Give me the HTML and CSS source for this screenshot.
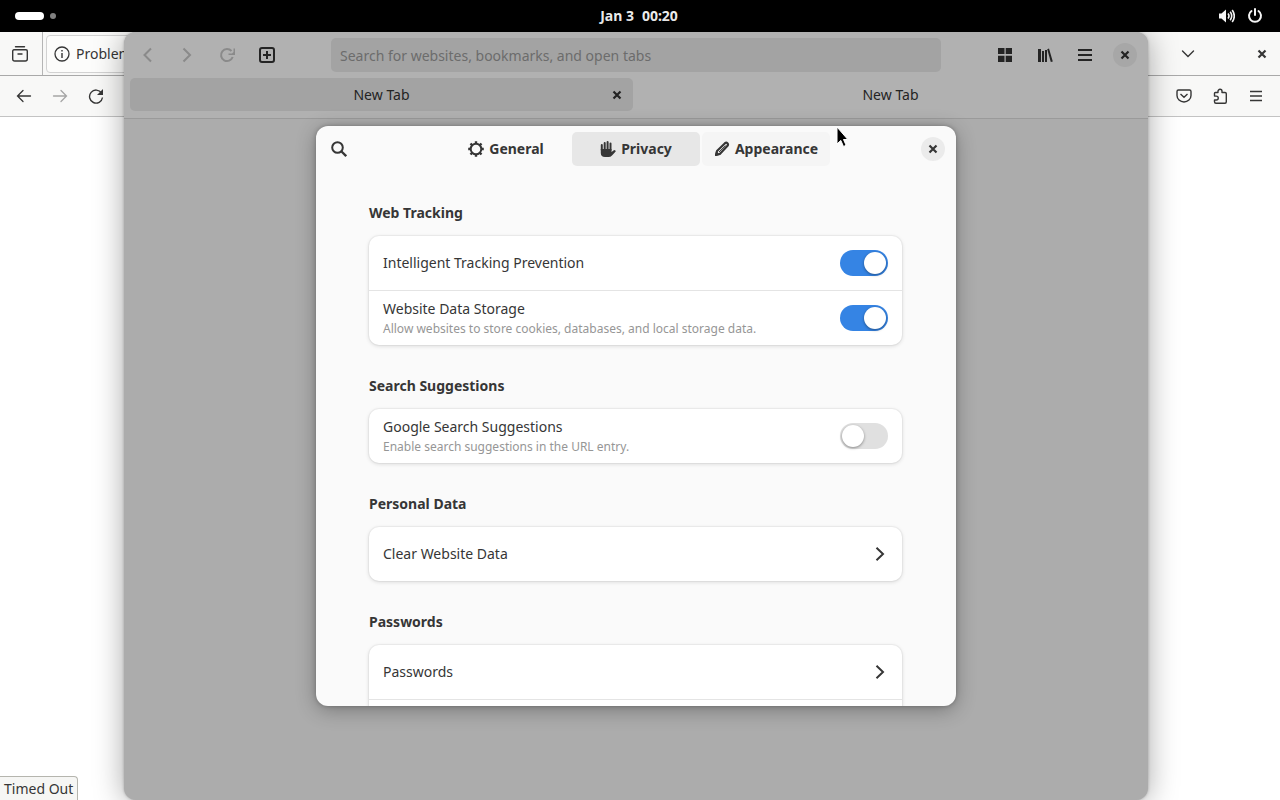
FILE: index.html
```html
<!DOCTYPE html>
<html lang="en">
<head>
<meta charset="utf-8">
<meta name="viewport" content="width=device-width, initial-scale=1">
<title>Desktop</title>
<link rel="stylesheet" href="styles.css">
</head>
<body>
<div class="desktop">
  <header class="panel">
    <div class="panel-start"><span class="pill"></span><span class="dot"></span></div>
    <time class="clock"><span>Jan 3</span><span>00:20</span></time>
    <div class="panel-end">
      <svg class="icon" viewBox="0 0 16 16"><path d="M0 5.500h2.500L7 1.500v13L2.500 10.500H0z" fill="currentColor"/><path d="M9 5.500q2 2.500 0 5M11.200 3.800q3 4.200 0 8.400M13.200 2q4.200 6 0 12" fill="none" stroke="currentColor" stroke-width="1.600"/></svg>
      <svg class="icon" viewBox="0 0 16 16"><path d="M4.500 3A6 6 0 1 0 11.500 3M8 1v6" fill="none" stroke="currentColor" stroke-width="2" stroke-linecap="round"/></svg>
    </div>
  </header>

  <main class="workspace">
    <section class="browser">
      <div class="tabstrip">
        <button class="view-button" aria-label="Recent browsing"><svg class="icon" viewBox="0 0 16 16"><path d="M3.500 .8h9M2 3.800h12q1.300 0 1.300 1.300V13q0 2-2 2H2.700q-2 0-2-2V5.100Q.7 3.800 2 3.800zM6 8h4" fill="none" stroke="currentColor" stroke-width="1.400" stroke-linecap="round"/></svg></button>
        <button class="page-tab"><svg class="icon" viewBox="0 0 16 16"><circle cx="8" cy="8" r="7" fill="none" stroke="currentColor" stroke-width="1.300"/><path d="M8 7v5M8 4v1.500" stroke="currentColor" stroke-width="1.400"/></svg>Problem</button>
        <span class="spacer"></span>
        <button class="tool list-tabs" aria-label="List all tabs"><svg class="icon" viewBox="0 0 16 16"><path d="M2.500 5L8 10.500 13.500 5" fill="none" stroke="currentColor" stroke-width="1.400" stroke-linecap="round"/></svg></button>
        <button class="tool" aria-label="Close browser"><svg class="icon" viewBox="0 0 16 16"><path d="M4.500 4.500l7 7M11.500 4.500l-7 7" stroke="currentColor" stroke-width="2.200"/></svg></button>
      </div>
      <div class="toolbar">
        <button class="tool" aria-label="Back"><svg class="icon" viewBox="0 0 16 16"><path d="M14.500 8H1.500M7 2.500L1.500 8 7 13.500" fill="none" stroke="currentColor" stroke-width="1.300" stroke-linecap="round"/></svg></button>
        <button class="tool" aria-label="Forward" disabled><svg class="icon" viewBox="0 0 16 16"><path d="M1.500 8h13M9 2.500L14.500 8 9 13.500" fill="none" stroke="currentColor" stroke-width="1.300" stroke-linecap="round"/></svg></button>
        <button class="tool" aria-label="Reload"><svg class="icon" viewBox="0 0 16 16"><path d="M13.500 5A6.500 6.500 0 1 0 14.500 9.500" fill="none" stroke="currentColor" stroke-width="1.400"/><path d="M15 1v6H9z" fill="currentColor"/></svg></button>
        <span class="spacer"></span>
        <button class="tool" aria-label="Save to Pocket"><svg class="icon" viewBox="0 0 16 16"><path d="M2.500 2h11q1.500 0 1.500 1.500V7.500a7 6.500 0 0 1-14 0V3.500Q1 2 2.500 2zM4.500 6L8 9.200 11.500 6" fill="none" stroke="currentColor" stroke-width="1.400"/></svg></button>
        <button class="tool" aria-label="Extensions"><svg class="icon" viewBox="0 0 16 16"><path d="M2.500 7.500V5.300Q2.500 4.500 3.300 4.500H6V3.300a2 2 0 0 1 4 0v1.200H13q1.300 0 1.300 1.300v8q0 1.500-1.300 1.500H4q-1.500 0-1.500-1.500V12H4.300a1.900 1.900 0 0 0 0-3.900H2.500z" fill="none" stroke="currentColor" stroke-width="1.400" stroke-linejoin="round"/></svg></button>
        <button class="tool" aria-label="Application menu"><svg class="icon" viewBox="0 0 16 16"><path d="M2 3.500h12M2 8h12M2 12.500h12" stroke="currentColor" stroke-width="1.300"/></svg></button>
      </div>
      <div class="page"><output class="status">Timed Out</output></div>
    </section>

    <section class="web-window">
      <div class="headerbar">
        <div class="nav">
          <button class="flat" aria-label="Back" disabled><svg class="icon" viewBox="0 0 16 16"><path d="M12 1.500L5.500 8l6.500 6.500" fill="none" stroke="currentColor" stroke-width="2"/></svg></button>
          <button class="flat" aria-label="Forward" disabled><svg class="icon" viewBox="0 0 16 16"><path d="M4.500 1.500L11 8l-6.500 6.500" fill="none" stroke="currentColor" stroke-width="2"/></svg></button>
          <button class="flat" aria-label="Reload" disabled><svg class="icon" viewBox="0 0 16 16"><path d="M12.500 4A6 6 0 1 0 13.700 10" fill="none" stroke="currentColor" stroke-width="2"/><path d="M16 1.500V8H9.500V6.500H13L14.500 5V1.500z" fill="currentColor"/></svg></button>
          <button class="flat" aria-label="New tab"><svg class="icon" viewBox="0 0 16 16"><rect x="1" y="1" width="14" height="14" rx="2" fill="none" stroke="currentColor" stroke-width="2"/><path d="M8 4v8M4 8h8" stroke="currentColor" stroke-width="2"/></svg></button>
        </div>
        <input class="address" type="text" aria-label="Address" placeholder="Search for websites, bookmarks, and open tabs">
        <div class="actions">
          <button class="flat" aria-label="Tab overview"><svg class="icon" viewBox="0 0 16 16"><path d="M1 1h6.500v6H1zM8.700 1H15v6H8.700zM1 8.700h6.500V15H1zM8.700 8.700H15V15H8.700z" fill="currentColor"/></svg></button>
          <button class="flat" aria-label="Bookmarks"><svg class="icon" viewBox="0 0 16 16"><path d="M1 2h3v13H1zM5 4h2v11H5zM8 3h2v12H8zM10.200 2.200l1.800-.7L15.800 14.500l-2 .6z" fill="currentColor"/></svg></button>
          <button class="flat" aria-label="Main menu"><svg class="icon" viewBox="0 0 16 16"><path d="M1 3h14M1 8h14M1 13h14" stroke="currentColor" stroke-width="2"/></svg></button>
          <button class="round" aria-label="Close window"><svg class="icon" viewBox="0 0 16 16"><path d="M4.500 4.500l7 7M11.500 4.500l-7 7" stroke="currentColor" stroke-width="2.200"/></svg></button>
        </div>
      </div>
      <div class="tabbar">
        <div class="tab tab-active"><button class="tab-label">New Tab</button><button class="tab-close" aria-label="Close tab"><svg class="icon" viewBox="0 0 16 16"><path d="M4.500 4.500l7 7M11.500 4.500l-7 7" stroke="currentColor" stroke-width="2.200"/></svg></button></div>
        <div class="tab"><button class="tab-label">New Tab</button></div>
      </div>
      <div class="web-view"></div>
    </section>

    <section class="dialog" role="dialog" aria-label="Preferences">
      <div class="dialog-header">
        <button class="flat search" aria-label="Search"><svg class="icon" viewBox="0 0 16 16"><circle cx="6.500" cy="6.500" r="5.300" fill="none" stroke="currentColor" stroke-width="2"/><path d="M10.300 10.300l4.900 4.900" stroke="currentColor" stroke-width="2.300"/></svg></button>
        <nav class="switcher">
          <button class="view"><svg class="icon" viewBox="0 0 16 16"><circle cx="8" cy="8" r="5.300" fill="none" stroke="currentColor" stroke-width="2"/><path d="M8 .2v2.500M8 13.300v2.500M.2 8h2.500M13.300 8h2.500M2.500 2.500l1.800 1.800M11.700 11.700l1.800 1.800M13.500 2.500l-1.800 1.800M4.300 11.700l-1.800 1.800" stroke="currentColor" stroke-width="2.400"/></svg>General</button>
          <button class="view view-active"><svg class="icon" viewBox="0 0 16 16"><path d="M1.800 9V4M4.700 9V2M7.600 9V1M10.500 9V2.500" stroke="currentColor" stroke-width="2" stroke-linecap="round"/><path d="M.8 8h10.700v3l2.700-2q1.700 0 1.500 1.500L12 14.500Q10.500 16 8.500 16H5Q.8 16 .8 12z" fill="currentColor"/></svg>Privacy</button>
          <button class="view view-hover"><svg class="icon" viewBox="0 0 16 16"><path d="M2 14l1-4 8-7.800q1.300-1 2.400.1t.1 2.500L5.800 13z" fill="none" stroke="currentColor" stroke-width="2.200" stroke-linejoin="round"/><path d="M1 15l1.200-5L6 13.800z" fill="currentColor"/><path d="M5 11l6.500-6.300" stroke="currentColor" stroke-width="1"/></svg>Appearance</button>
        </nav>
        <button class="round" aria-label="Close preferences"><svg class="icon" viewBox="0 0 16 16"><path d="M4.500 4.500l7 7M11.500 4.500l-7 7" stroke="currentColor" stroke-width="2.200"/></svg></button>
      </div>
      <div class="dialog-body">
        <section class="group">
          <h2>Web Tracking</h2>
          <div class="card">
            <label class="row"><span class="text"><span>Intelligent Tracking Prevention</span></span><input class="switch" type="checkbox" role="switch" checked></label>
            <label class="row"><span class="text"><span>Website Data Storage</span><small>Allow websites to store cookies, databases, and local storage data.</small></span><input class="switch" type="checkbox" role="switch" checked></label>
          </div>
        </section>
        <section class="group">
          <h2>Search Suggestions</h2>
          <div class="card">
            <label class="row"><span class="text"><span>Google Search Suggestions</span><small>Enable search suggestions in the URL entry.</small></span><input class="switch" type="checkbox" role="switch"></label>
          </div>
        </section>
        <section class="group">
          <h2>Personal Data</h2>
          <div class="card">
            <button class="row"><span class="text">Clear Website Data</span><svg class="icon" viewBox="0 0 16 16"><path d="M4.500 1.700L11 8l-6.500 6.300" fill="none" stroke="currentColor" stroke-width="2"/></svg></button>
          </div>
        </section>
        <section class="group">
          <h2>Passwords</h2>
          <div class="card">
            <button class="row"><span class="text">Passwords</span><svg class="icon" viewBox="0 0 16 16"><path d="M4.500 1.700L11 8l-6.500 6.300" fill="none" stroke="currentColor" stroke-width="2"/></svg></button>
            <div class="row"></div>
          </div>
        </section>
      </div>
    </section>

    <svg class="pointer" viewBox="0 0 12 22"><path d="M1 1v17l3.800-3.600L7.500 20.500l2.600-1.200L7.500 13.500h4.300z" fill="#000" stroke="#fff" stroke-width="1"/></svg>
  </main>
</div>
</body>
</html>
```
FILE: styles.css
```css
* { box-sizing: border-box; }

body {
  margin: 0;
  font: 14px/22px "Noto Sans", "Open Sans", sans-serif;
  color: #363636;
}

button, input {
  margin: 0;
  padding: 0;
  border: 0;
  background: none;
  color: inherit;
  font: inherit;
}

.icon { display: block; flex: none; width: 16px; height: 16px; }
.spacer { flex: 1; }

.desktop { display: flex; flex-direction: column; height: 100vh; overflow: hidden; }

/* Top panel */
.panel {
  flex: none;
  display: grid;
  grid-template-columns: 1fr auto 1fr;
  align-items: center;
  height: 32px;
  padding: 0 17px 0 15px;
  background: #000;
  color: #f4f4f4;
}
.panel-start, .panel-end { display: flex; align-items: center; }
.panel-start { gap: 6px; }
.panel-end { justify-content: flex-end; gap: 12px; }
.pill { width: 29px; height: 8px; border-radius: 4px; background: #fff; }
.dot { width: 6px; height: 6px; border-radius: 50%; background: #808080; }
.clock { display: flex; gap: 8px; font-weight: 700; }

.workspace { position: relative; flex: 1; min-height: 0; }

/* Browser behind */
.browser { display: flex; flex-direction: column; height: 100%; background: #fff; }
.tabstrip, .toolbar { flex: none; display: flex; align-items: center; background: #f8f8f7; }
.tabstrip { height: 44px; border-bottom: 1px solid #a9a9a9; }
.view-button { display: grid; place-items: center; align-self: stretch; width: 43px; padding-right: 2px; border-right: 1px solid #b5b5b5; }
.page-tab {
  display: flex;
  align-items: center;
  gap: 6px;
  width: 200px;
  height: 38px;
  margin-left: 3px;
  padding: 0 7px;
  border: 1px solid #d2d2d2;
  border-radius: 4px;
  background: #fcfcfb;
}
.tool { display: grid; place-items: center; width: 36px; height: 36px; }
.tool:disabled { color: #a5a5a5; }
.list-tabs { margin-right: 38px; }
.toolbar { height: 41px; padding: 0 6px; border-bottom: 1px solid #c3c3c3; }
.page { flex: 1; display: flex; align-items: flex-end; }
.status {
  padding: 1px 4px 0;
  border: 1px solid #b5b5ae;
  border-width: 1px 1px 0 0;
  border-top-right-radius: 4px;
  background: #f6f6f4;
}

/* Dimmed web window */
.web-window {
  position: absolute;
  inset: 0 132px 0 124px;
  display: flex;
  flex-direction: column;
  border-radius: 12px;
  background: #acacac;
  box-shadow: 0 2px 30px rgba(0, 0, 0, 0.35), 0 0 3px rgba(0, 0, 0, 0.25);
  color: #242424;
  overflow: hidden;
}
.headerbar {
  flex: none;
  display: grid;
  grid-template-columns: 1fr minmax(0, 610px) 1fr;
  align-items: center;
  height: 46px;
  padding: 0 6px;
  background: #b1b1b1;
}
.nav, .actions { display: flex; align-items: center; gap: 6px; }
.actions { justify-content: flex-end; }
.flat { display: grid; place-items: center; width: 34px; height: 34px; }
.flat:disabled { color: #8a8a8a; }
.address { width: 100%; height: 34px; padding: 0 9px; border-radius: 5px; background: #a3a3a3; }
.address::placeholder { color: #6c6c6c; opacity: 1; }
.round { display: grid; place-items: center; width: 24px; height: 24px; margin: 0 5px; border-radius: 50%; background: #a7a7a7; }
.tabbar { flex: none; display: flex; gap: 6px; height: 41px; padding: 0 6px 7px; border-bottom: 1px solid #9a9a9a; background: #b1b1b1; }
.tab { flex: 1; display: grid; grid-template-columns: 32px 1fr 32px; align-items: center; border-radius: 5px; }
.tab-active { background: #a3a3a3; }
.tab-label { grid-column: 2; }
.tab-close { display: grid; place-items: center; height: 24px; }
.web-view { flex: 1; }

/* Preferences */
.dialog {
  position: absolute;
  inset: 94px 324px 94px 316px;
  display: flex;
  flex-direction: column;
  border-radius: 12px;
  background: #fafafa;
  box-shadow: 0 4px 20px rgba(0, 0, 0, 0.3), 0 0 4px rgba(0, 0, 0, 0.25);
  overflow: hidden;
}
.dialog-header { flex: none; display: grid; grid-template-columns: 1fr auto 1fr; align-items: center; height: 46px; padding: 0 6px; }
.dialog-header .round { justify-self: end; background: #ebebeb; }
.switcher { display: flex; gap: 2px; }
.view {
  display: flex;
  align-items: center;
  justify-content: center;
  gap: 5px;
  width: 128px;
  height: 34px;
  border-radius: 5px;
  font-weight: 700;
}
.view-active { background: #e7e7e7; }
.view-hover { background: #f5f5f5; }
.dialog-body { flex: 1; min-height: 0; overflow: hidden; padding: 30px 54px 0 53px; }
.group { margin-bottom: 30px; }
.group h2 { margin: 0 0 12px; font-size: 14px; line-height: 22px; font-weight: 700; }
.card { border-radius: 10px; background: #fff; box-shadow: 0 0 0 1px rgba(0, 0, 0, 0.03), 0 1px 4px rgba(0, 0, 0, 0.14); }
.row { display: flex; align-items: center; width: 100%; height: 54px; padding: 0 14px; text-align: left; }
.row + .row { height: 55px; border-top: 1px solid #e4e4e4; }
.row .text { flex: 1; display: flex; flex-direction: column; }
.row small { font-size: 12px; line-height: 18px; color: #969696; }
.switch {
  appearance: none;
  display: flex;
  align-items: center;
  width: 48px;
  height: 26px;
  padding: 0 2px;
  border-radius: 13px;
  background: #e0e0e0;
}
.switch::before { content: ""; width: 22px; height: 22px; border-radius: 50%; background: #fff; box-shadow: 0 1px 3px rgba(0, 0, 0, 0.4); }
.switch:checked { justify-content: flex-end; background: #3584e4; }

.pointer { position: absolute; left: 836px; top: 94px; width: 12px; height: 22px; }
```
